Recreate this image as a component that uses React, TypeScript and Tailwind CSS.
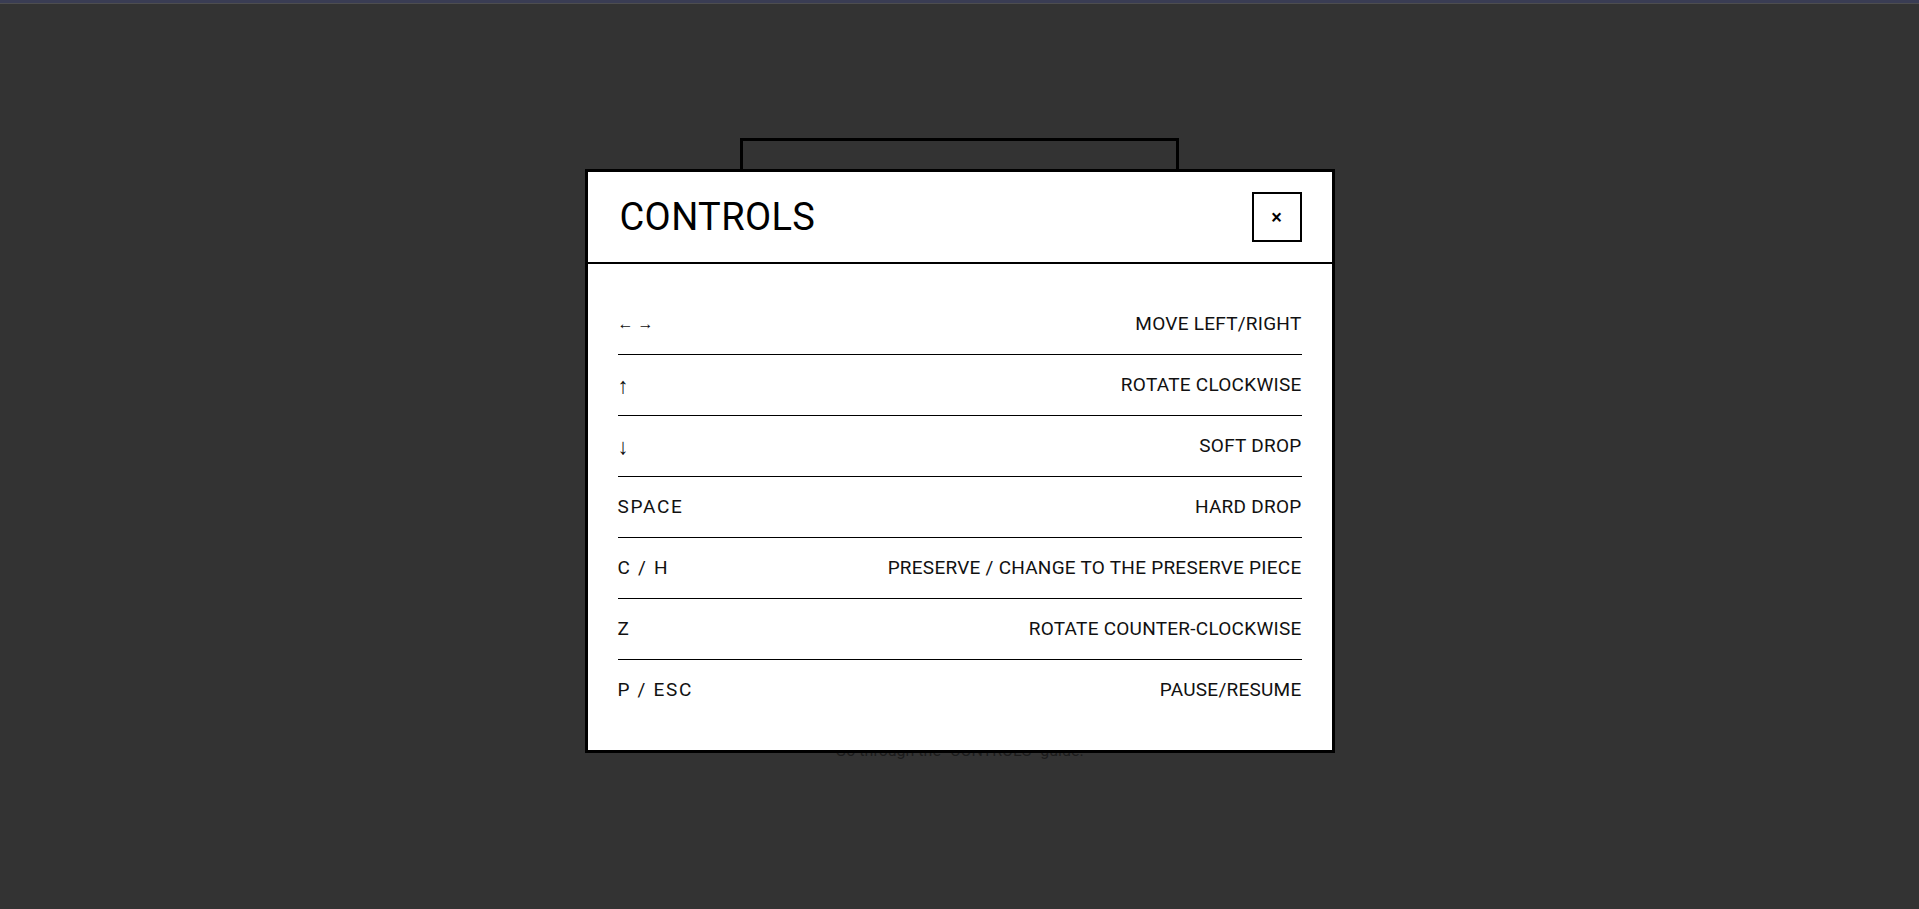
import React from "react"

const controls = [
  { key: "← →", action: "MOVE LEFT/RIGHT", keyClass: "text-[16px] font-semibold tracking-normal" },
  { key: "↑", action: "ROTATE CLOCKWISE", keyClass: "text-[22px] font-semibold" },
  { key: "↓", action: "SOFT DROP", keyClass: "text-[22px] font-semibold" },
  { key: "SPACE", action: "HARD DROP", keyClass: "tracking-[1.7px]" },
  { key: "C / H", action: "PRESERVE / CHANGE TO THE PRESERVE PIECE", keyClass: "tracking-[1.7px]" },
  { key: "Z", action: "ROTATE COUNTER-CLOCKWISE", keyClass: "tracking-[1.7px]" },
  { key: "P / ESC", action: "PAUSE/RESUME", keyClass: "tracking-[1.7px]" },
]

export default function App() {
  return (
    <div className="relative min-h-screen bg-[#333333] font-['Roboto','Liberation_Sans',sans-serif]">
      <div className="h-[3px] bg-[#3a3d54]" />
      <div className="h-px bg-[#4d4d4f]" />

      {/* start screen behind the dialog */}
      <main className="flex flex-col items-center pt-[134px]">
        <div className="h-[582px] w-[439px] border-[3px] border-black" />
        <p className="mt-[19px] text-[16px] leading-6 text-[#1c1c1c]">Go through the "CONTROLS" guide.</p>
      </main>

      <div className="fixed inset-0 flex items-center justify-center pt-[13px]">
        <div className="w-[750px] border-[3px] border-black bg-white">
          <div className="flex items-center justify-between border-b-2 border-black px-[30px] py-[20px]">
            <h2 className="pl-[2px] text-[38px] leading-none tracking-[0.01em] text-black">CONTROLS</h2>
            <button className="flex h-[50px] w-[50px] items-center justify-center border-2 border-black text-[20px] font-medium leading-none text-black">
              ×
            </button>
          </div>
          <div className="px-[30px] py-[30px]">
            {controls.map((c, i) => (
              <div
                key={c.action}
                className={`flex h-[60px] items-center justify-between text-[19px] text-[#111] ${
                  i < controls.length - 1 ? "box-content border-b border-black" : ""
                }`}
              >
                <span className={c.keyClass}>{c.key}</span>
                <span className="tracking-[0.25px]">{c.action}</span>
              </div>
            ))}
          </div>
        </div>
      </div>
    </div>
  )
}
